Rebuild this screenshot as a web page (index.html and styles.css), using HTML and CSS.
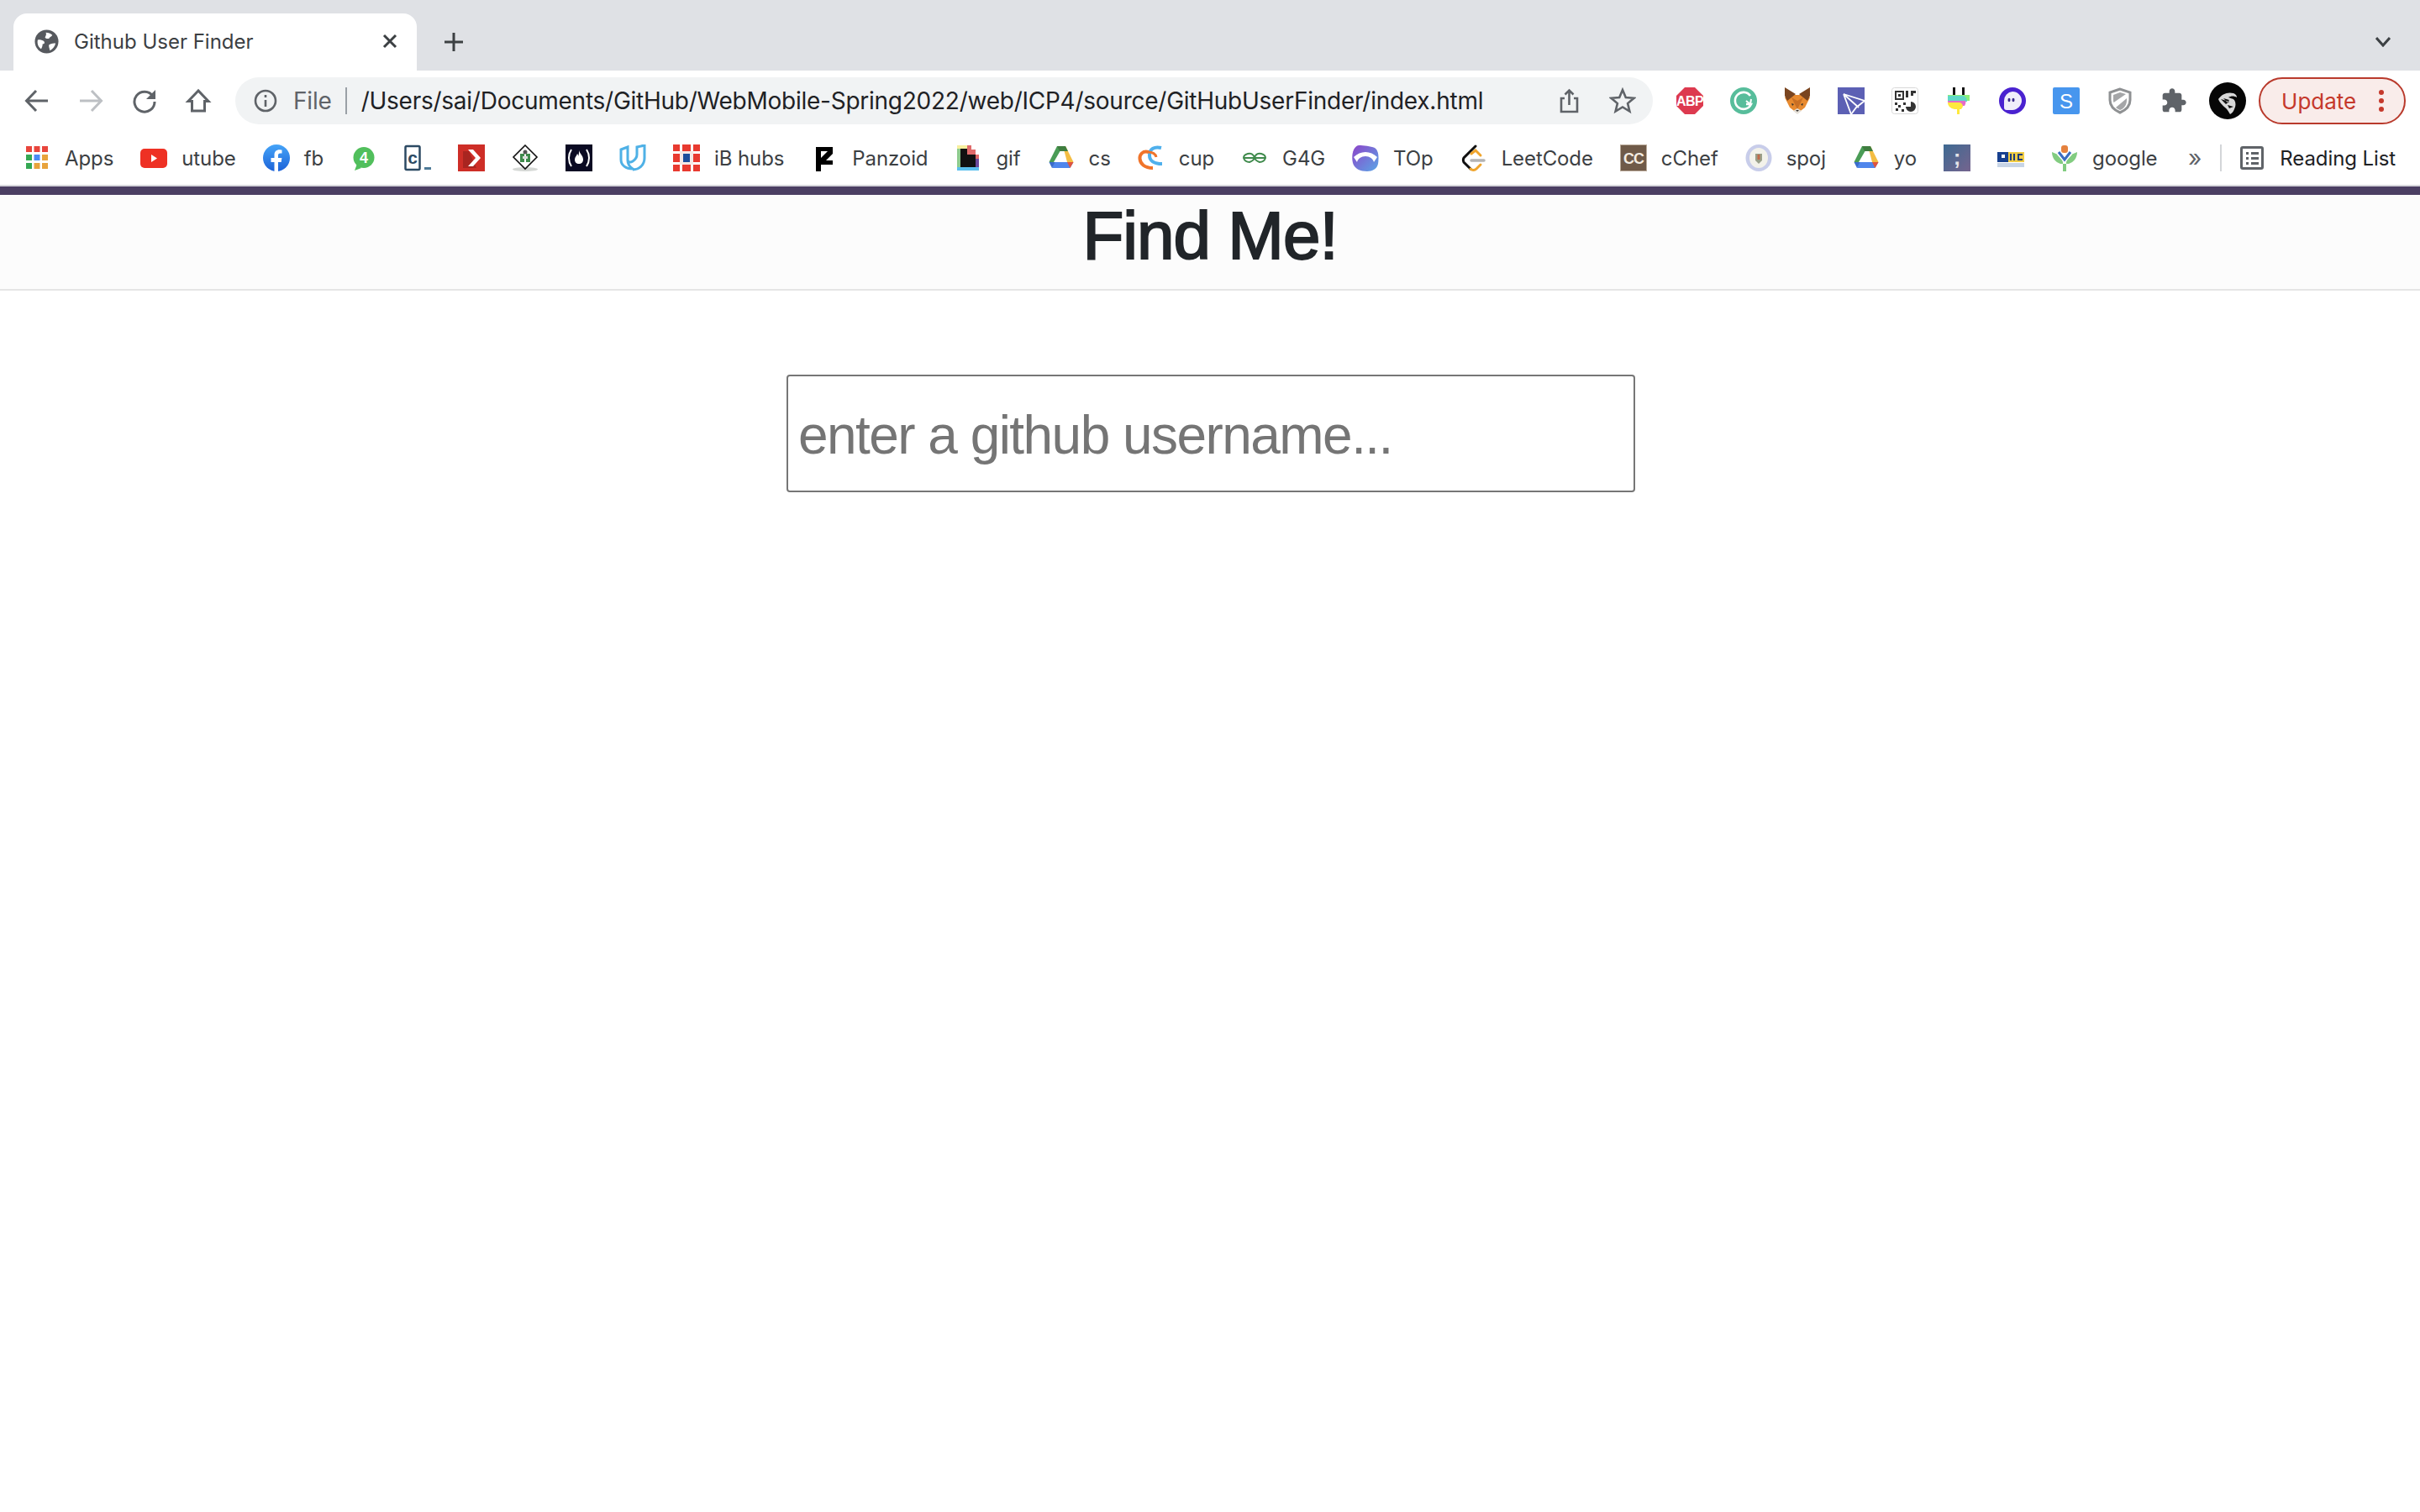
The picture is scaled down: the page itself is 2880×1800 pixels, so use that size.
FILE: index.html
```html
<!DOCTYPE html>
<html>

<head>
    <meta charset="utf-8">
    <title>Github User Finder</title>
    <link rel="stylesheet" href="styles.css">
</head>

<body>
    <svg class="defs" width="0" height="0">
        <symbol id="drive" viewBox="0 0 32 32">
            <path fill="#4a9c56" d="M11 2h7L7 21 1.500 21z" />
            <path fill="#f4bd42" d="M18 2h3l9.500 19H23z" />
            <path fill="#3f7d3f" d="M11 2h10l3 6H14z" />
            <path fill="#4f86ec" d="M7.500 21H30.500l-4 7H5z" />
            <path fill="#3a6ccb" d="M1.500 21h7L5 28z" />
            <path fill="#e0543f" d="M23 21h7.500L26.500 28z" />
        </symbol>
    </svg>

    <!-- tabs -->
    <div class="tabstrip">
        <div class="tab">
            <svg class="favicon" viewBox="0 0 30 30">
                <circle cx="15" cy="15" r="14.500" fill="#56595e" />
                <path fill="#fff" d="M4 13c3-1 6 0 8 2 1 2 0 3-2 3 0 3-1 5-2 6-3-2-5-6-4-11zM14 4c3 0 6 1 8 3-1 2-3 2-4 4-2 1-4 0-5-1 1-2 2-4 1-6zM18 19c3-2 6-2 8-2-1 4-3 7-7 9 0-2-2-5-1-7z" />
            </svg>
            <span class="tab-title">Github User Finder</span>
            <svg class="tab-close" viewBox="0 0 18 18">
                <path d="M2 2l14 14M16 2L2 16" />
            </svg>
        </div>
        <svg class="new-tab" viewBox="0 0 24 24">
            <path d="M12 1v22M1 12h22" />
        </svg>
        <svg class="tab-menu" viewBox="0 0 18 12">
            <path d="M1 1l8 9 8-9" />
        </svg>
    </div>

    <!-- address bar -->
    <div class="toolbar">
        <svg class="ico line" viewBox="0 0 32 32"><path d="M29 16H5M15 4L3.500 16 15 28" /></svg>
        <svg class="ico line off" viewBox="0 0 32 32"><path d="M3 16h24M17 4l11.500 12L17 28" /></svg>
        <svg class="ico line" viewBox="0 0 32 32"><path d="M26 10.500A12 12 0 1 0 28 17" /><path class="solid" d="M29 3v11H18z" /></svg>
        <svg class="ico line" viewBox="0 0 32 32"><path d="M16 4L4 16.500h4.500V28h15V16.500H28z" /></svg>

        <div class="omnibox">
            <svg class="ico line thin" viewBox="0 0 32 32"><circle cx="16" cy="16" r="12" /><path d="M16 15v8M16 9v3" /></svg>
            <span class="file">File</span>
            <span class="omni-sep"></span>
            <span class="url">/Users/sai/Documents/GitHub/WebMobile-Spring2022/web/ICP4/source/GitHubUserFinder/index.html</span>
            <svg class="ico line thin" viewBox="0 0 32 32"><path d="M11 13H7v16h19V13h-4M16.500 21V4M11.500 8.500l5-5 5 5" /></svg>
            <svg class="ico line thin" viewBox="0 0 32 32"><path d="M16 3l3.800 9 9.700.8-7.400 6.300 2.300 9.400L16 23.500l-8.400 5 2.300-9.400-7.400-6.300 9.700-.8z" /></svg>
        </div>

        <div class="extensions">
            <svg class="ico" viewBox="0 0 32 32">
                <path fill="#dd3a4f" d="M10 0h12l10 10v12L22 32H10L0 22V10z" />
                <text class="ext-text abp" x="16" y="22">ABP</text>
            </svg>
            <svg class="ico" viewBox="0 0 32 32">
                <circle cx="16" cy="16" r="16" fill="#57bd9b" />
                <path fill="none" stroke="#fff" stroke-width="2.600" d="M24 10a10 10 0 1 0 1 10h-6" />
                <path fill="none" stroke="#fff" stroke-width="2" d="M19 16l5 4 1-6" />
            </svg>
            <svg class="ico" viewBox="0 0 32 32">
                <path fill="#e88a2f" d="M1 12l6 12 9 7 9-7 6-12-5-3H6z" />
                <path fill="#7a4520" d="M1 0l13 8-5 4-5 4-3-6zM31 0L18 8l5 4 5 4 3-6z" />
                <path fill="#c96f24" d="M9 12l7 14 7-14-7 4z" />
                <path fill="#e5e0d8" d="M11 28l5-3 5 3-5 4z" />
                <path fill="#34302c" d="M14 27h4l-2 2zM9 19l3 1-2 2zM23 19l-3 1 2 2z" />
            </svg>
            <svg class="ico" viewBox="0 0 32 32">
                <rect width="32" height="32" fill="#5c60b4" />
                <path fill="none" stroke="#fff" stroke-width="1.800" d="M7 8l25 8M7 8l9 24M7 8l18 16M32 16l-10 8-6 8" />
            </svg>
            <svg class="ico" viewBox="0 0 32 32">
                <rect x=".5" y=".5" width="31" height="31" rx="3" fill="#fff" stroke="#d8d8d8" />
                <path fill="none" stroke="#333" stroke-width="2" d="M5 5h9v9H5z" />
                <path fill="#333" d="M8 8h3v3H8zM17 4h3v8h-3zM23 4h6v3h-3v3h-3zM4 18h3v3H4zM8 21h3v3H8zM5 25h3v3H5zM12 26h3v3h-3zM14 18h3v3h-3z" />
                <path fill="#333" d="M23 17a6 6 0 1 1-6 6h6z" />
            </svg>
            <svg class="ico" viewBox="0 0 32 32">
                <path fill="#111" d="M9 0h3v9H9zM20 0h3v9h-3z" />
                <path fill="#8bf07a" d="M3 9h26v7H3z" />
                <path fill="#5fd9c8" d="M3 10h17c4 0 6 3 6 7H3z" />
                <path fill="#e56cc8" d="M3 16h21c1 2 0 4-1 6H6c-2-2-3-4-3-6z" />
                <path fill="#ffe93d" d="M3 18h13c3 0 5 2 5 5l-2 3h-2v6h-3v-6h-3c-5-1-8-4-8-8z" />
            </svg>
            <svg class="ico" viewBox="0 0 32 32">
                <circle cx="16" cy="16" r="16" fill="#4a22d0" />
                <path fill="#f0eefa" d="M16 5a11 11 0 0 1 11 11c0 5-5 11-11 11H9a3 3 0 0 1-3-3V16A11 11 0 0 1 16 5z" />
                <ellipse cx="12" cy="15" rx="1.500" ry="2.200" fill="#3a2a8a" />
                <ellipse cx="17" cy="15" rx="1.500" ry="2.200" fill="#3a2a8a" />
            </svg>
            <svg class="ico" viewBox="0 0 32 32">
                <rect width="32" height="32" rx="2" fill="#4796ee" />
                <text class="ext-text s-mark" x="16" y="24.500">S</text>
            </svg>
            <svg class="ico" viewBox="0 0 32 32">
                <path fill="none" stroke="#8f9193" stroke-width="3" d="M16 2L4 6v9c0 7 5 12 12 15 7-3 12-8 12-15V6z" />
                <path fill="#a5a6a8" d="M16 6L8 9v6c0 1 0 2 .5 3L23 8zM24 13L11 24c1 1 3 2 5 3 5-2 8-6 8-12z" />
            </svg>
            <svg class="ico" viewBox="0 0 24 24">
                <path fill="#5f6368" d="M20.500 11H19V7c0-1.100-.9-2-2-2h-4V3.500C13 2.120 11.880 1 10.500 1S8 2.120 8 3.500V5H4c-1.100 0-1.990.9-1.990 2v3.800H3.500c1.490 0 2.700 1.210 2.700 2.700s-1.210 2.700-2.700 2.700H2V20c0 1.100.9 2 2 2h3.800v-1.500c0-1.490 1.210-2.700 2.700-2.700 1.490 0 2.700 1.210 2.700 2.700V22H17c1.100 0 2-.9 2-2v-4h1.500c1.380 0 2.500-1.120 2.500-2.500S21.880 11 20.500 11z" />
            </svg>
        </div>

        <svg class="avatar" viewBox="0 0 44 44">
            <circle cx="22" cy="22" r="22" fill="#060606" />
            <path fill="#d8d8d8" d="M11 20c4-6 11-9 18-7 3 1 4 3 4 5-3-2-7-2-10 0 2 1 5 1 7 3 2 3 2 7 0 11-1 3-3 5-5 6-2-3-3-6-6-8-3-3-6-5-8-10z" />
            <path fill="#111" d="M17 19l7 2-2 3zM22 27l7 2-5 2zM14 20l6 6 4-3z" />
        </svg>

        <div class="update">
            <span>Update</span>
            <svg class="update-dots" viewBox="0 0 8 28">
                <circle cx="4" cy="4" r="3" />
                <circle cx="4" cy="14" r="3" />
                <circle cx="4" cy="24" r="3" />
            </svg>
        </div>
    </div>

    <!-- bookmarks -->
    <div class="bookmarks">
        <div class="bm">
            <svg class="ico" viewBox="0 0 32 32">
                <g fill="#e8453c"><rect x="3" y="2" width="7" height="7" /><rect x="12.500" y="2" width="7" height="7" /><rect x="22" y="2" width="7" height="7" /></g>
                <rect x="3" y="12" width="7" height="7" fill="#34a853" /><rect x="12.500" y="12" width="7" height="7" fill="#4a8af4" /><rect x="22" y="12" width="7" height="7" fill="#e8a33c" />
                <rect x="3" y="22" width="7" height="7" fill="#34a853" /><rect x="12.500" y="22" width="7" height="7" fill="#e8a33c" /><rect x="22" y="22" width="7" height="7" fill="#e8a33c" />
            </svg>
            <span>Apps</span>
        </div>
        <div class="bm">
            <svg class="ico" viewBox="0 0 32 32">
                <rect y="5" width="32" height="23" rx="5" fill="#ee3124" />
                <path fill="#fff" d="M13 12l7 4.500-7 4.500z" />
            </svg>
            <span>utube</span>
        </div>
        <div class="bm">
            <svg class="ico" viewBox="0 0 32 32">
                <defs><linearGradient id="fbg" x1="0" y1="0" x2="0" y2="1"><stop offset="0" stop-color="#45a4f8" /><stop offset="1" stop-color="#1d63d8" /></linearGradient></defs>
                <circle cx="16" cy="16" r="16" fill="url(#fbg)" />
                <path fill="#fff" d="M13.500 32V21H9.500v-5h4v-3.500c0-4 2.400-6.200 6-6.200 1.500 0 3 .3 3 .3v4h-2c-2 0-2.500 1.200-2.500 2.500V16h4.400l-.7 5H18v11z" />
            </svg>
            <span>fb</span>
        </div>
        <div class="bm">
            <svg class="ico" viewBox="0 0 32 32">
                <circle cx="16" cy="15.500" r="12.500" fill="#51bf5c" />
                <path fill="#51bf5c" d="M5 31l3-8 5 5z" />
                <text class="ext-text four" x="16" y="22">4</text>
            </svg>
        </div>
        <div class="bm">
            <svg class="ico" viewBox="0 0 32 32">
                <rect x="1.500" y="2" width="17" height="28" rx="1.500" fill="#fff" stroke="#2c4a63" stroke-width="2.500" />
                <text class="ext-text c-mark" x="10" y="23">c</text>
                <rect x="24" y="27" width="8" height="3" fill="#4e7a97" />
            </svg>
        </div>
        <div class="bm">
            <svg class="ico" viewBox="0 0 32 32">
                <rect width="32" height="32" fill="#ce2e27" />
                <path fill="#a92520" d="M6 8h7l9 20H6z" />
                <path fill="#fff" d="M12 6h6l9 10-9 10h-6l9-10z" />
            </svg>
        </div>
        <div class="bm">
            <svg class="ico" viewBox="0 0 32 32">
                <ellipse cx="16" cy="29.500" rx="15" ry="2.500" fill="#d5d8d5" />
                <path fill="#fff" stroke="#111" stroke-width="1.600" d="M16 1l14 14-14 14L2 15z" />
                <path fill="#3f8a4c" d="M10 11h5v10h-5zM17 11h5v10h-5z" />
                <path fill="#ddd" d="M13 14h6v3h-6z" />
                <circle cx="16" cy="9" r="2.500" fill="#555" />
            </svg>
        </div>
        <div class="bm">
            <svg class="ico" viewBox="0 0 32 32">
                <rect width="32" height="32" fill="#0a0a23" />
                <path fill="none" stroke="#fff" stroke-width="2" d="M7 6c-4 6-4 14 0 20M25 6c4 6 4 14 0 20" />
                <path fill="#fff" d="M16 7c1 4 5 6 5 11 0 3-2 5-5 5s-5-2-5-5c0-3 2-4 3-7 1 1 1 2 1 3 1-2 1-4 1-7z" />
            </svg>
        </div>
        <div class="bm">
            <svg class="ico" viewBox="0 0 32 32">
                <path fill="none" stroke="#4fb1e6" stroke-width="3" d="M2 6l8-3v16c0 5 3 8 6 10-8 0-14-4-14-11zM10 5v13c0 3 3 4 6 2 3-2 5-5 5-8V3l9-2v15c0 8-6 14-14 14" />
            </svg>
        </div>
        <div class="bm">
            <svg class="ico" viewBox="0 0 32 32">
                <rect width="32" height="32" fill="#e83a30" />
                <path fill="#fff" d="M8 0h3v8H8zM21 0h3v8h-3zM8 24h3v8H8zM21 24h3v8h-3zM0 8h8v3H0zM24 8h8v3h-8zM0 21h8v3H0zM24 21h8v3h-8z" />
                <rect x="8" y="8" width="16" height="16" fill="#f4e9e6" />
                <rect x="12" y="11" width="8" height="10" fill="#1d4f9c" />
            </svg>
            <span>iB hubs</span>
        </div>
        <div class="bm">
            <svg class="ico" viewBox="0 0 32 32">
                <path fill="#000" d="M6 3h20v8l-8 8h8v5H12v8H6z" />
                <path fill="#fff" d="M12 8h8l-8 8z" />
            </svg>
            <span>Panzoid</span>
        </div>
        <div class="bm">
            <svg class="ico" viewBox="0 0 32 32">
                <path fill="#f7f09e" d="M3 1h12v4H3z" />
                <path fill="#8ecb8e" d="M3 5h4v22H3z" />
                <path fill="#e06a6a" d="M15 1h5v5h5v6H15z" />
                <path fill="#111" d="M7 5h8v7h10v15H7z" />
                <path fill="#6a4a9c" d="M25 17h4v12h-4z" />
                <path fill="#e06a6a" d="M25 12h4v5h-4z" />
                <path fill="#5bc0ee" d="M3 27h26v4H3z" />
            </svg>
            <span>gif</span>
        </div>
        <div class="bm">
            <svg class="ico"><use href="#drive" /></svg>
            <span>cs</span>
        </div>
        <div class="bm">
            <svg class="ico" viewBox="0 0 32 32">
                <path fill="none" stroke="#f0742a" stroke-width="4" d="M13 9C6 7 2 12 2.500 17 3 23 8 28 18 28" />
                <path fill="none" stroke="#4fb0ec" stroke-width="4" d="M28 4c-8-2-14 1-14 9 0 6 5 10 15 10" />
                <path fill="none" stroke="#f0742a" stroke-width="3" d="M12 9c6 0 9 2 10 6" />
            </svg>
            <span>cup</span>
        </div>
        <div class="bm">
            <svg class="ico" viewBox="0 0 32 32">
                <g fill="none" stroke="#3f8a4c" stroke-width="2"><path d="M16 16h13M16 16H3" /><path d="M16 16c-1-4-4-6-8-5s-5 3-5 5c1 3 3 5 7 5 3-1 5-2 6-5zM16 16c1-4 4-6 8-5s5 3 5 5c-1 3-3 5-7 5-3-1-5-2-6-5z" /></g>
            </svg>
            <span>G4G</span>
        </div>
        <div class="bm">
            <svg class="ico" viewBox="0 0 32 32">
                <defs><linearGradient id="top" x1="0" y1="0" x2="1" y2="1"><stop offset="0" stop-color="#8d44c9" /><stop offset="1" stop-color="#5aa6e6" /></linearGradient></defs>
                <path fill="url(#top)" d="M8 1c6 0 14 1 19 3 5 3 5 12 4 19-1 6-7 9-13 9C10 32 3 29 1 22-1 14 1 2 8 1z" />
                <path fill="#fff" d="M2 15c4-4 9-6 14-6s10 2 14 6l-4 6c-1-4-5-7-10-7S7 17 6 21z" />
            </svg>
            <span>TOp</span>
        </div>
        <div class="bm">
            <svg class="ico" viewBox="0 0 32 32">
                <path fill="none" stroke="#111" stroke-width="3" stroke-linecap="round" d="M18 2L4 16c-1 2-1 3 0 5l8 8" />
                <path fill="none" stroke="#f0a52c" stroke-width="3" stroke-linecap="round" d="M13 11l5-4 6 6M12 29c2 2 5 2 7 0l5-5" />
                <path fill="none" stroke="#b4b4b4" stroke-width="3.500" stroke-linecap="round" d="M13 19h15" />
            </svg>
            <span>LeetCode</span>
        </div>
        <div class="bm">
            <svg class="ico" viewBox="0 0 32 32">
                <rect width="32" height="32" fill="#6f5a48" />
                <rect x=".5" y=".5" width="31" height="31" fill="none" stroke="#b9a998" />
                <text class="ext-text cc-mark" x="16" y="22.500">CC</text>
            </svg>
            <span>cChef</span>
        </div>
        <div class="bm">
            <svg class="ico" viewBox="0 0 32 32">
                <ellipse cx="16" cy="16" rx="15.500" ry="16" fill="#c8cdea" />
                <ellipse cx="16" cy="16" rx="11" ry="12" fill="#f3f2ea" />
                <path fill="#9aa08a" d="M12 11h8v8l-4 4-4-4z" />
                <rect x="14.500" y="12" width="3" height="6" fill="#c26a4a" />
            </svg>
            <span>spoj</span>
        </div>
        <div class="bm">
            <svg class="ico"><use href="#drive" /></svg>
            <span>yo</span>
        </div>
        <div class="bm">
            <svg class="ico" viewBox="0 0 32 32">
                <defs><linearGradient id="semi" x1="0" y1="0" x2="1" y2="1"><stop offset="0" stop-color="#3e6a92" /><stop offset="1" stop-color="#75648e" /></linearGradient></defs>
                <rect width="32" height="32" fill="url(#semi)" />
                <text class="ext-text semi-mark" x="16" y="24">;</text>
            </svg>
        </div>
        <div class="bm">
            <svg class="ico" viewBox="0 0 32 32">
                <rect y="9" width="13" height="12" fill="#17408f" />
                <rect x="5" y="12" width="4" height="4" fill="#fff" />
                <rect x="13" y="9" width="19" height="12" fill="#f0cc44" />
                <path fill="#1f3d7a" d="M15 11h2v8h-2zM19 11h2v8h-2zM24 11h6v2h-4v4h4v2h-6z" />
                <rect y="22" width="32" height="5" fill="#c7d4e6" />
            </svg>
        </div>
        <div class="bm">
            <svg class="ico" viewBox="0 0 32 32">
                <path fill="#6cc36a" d="M1 9l7 3c3 2 5 6 6 9v11h4V21c1-3 3-7 6-9l7-3c0 7-4 12-10 14h-10C5 21 1 16 1 9z" opacity=".85" />
                <path fill="#fff" d="M7 12l9 10 9-10-9-3z" />
                <path fill="none" stroke="#3a6cc0" stroke-width="3" d="M9 9l7 9 7-9" />
                <rect x="12" y="1" width="8" height="9" rx="3" fill="#e5813e" />
            </svg>
            <span>google</span>
        </div>

        <div class="bm-end">
            <span class="more">»</span>
            <span class="bm-sep"></span>
            <div class="bm reading">
                <svg class="ico" viewBox="0 0 32 32">
                    <rect x="3.500" y="3.500" width="25" height="25" rx="1.500" fill="none" stroke="#5f6368" stroke-width="3" />
                    <path fill="#5f6368" d="M9 9h3v3H9zM15 9h9v3h-9zM9 15h3v3H9zM15 15h9v3h-9zM9 21h3v3H9zM15 21h9v3h-9z" />
                </svg>
                <span>Reading List</span>
            </div>
        </div>
    </div>

    <div class="accent"></div>

    <!-- page -->
    <header class="page-head">
        <h1>Find Me!</h1>
    </header>
    <main class="page-main">
        <input class="search" type="text" placeholder="enter a github username...">
    </main>
</body>

</html>
```

FILE: styles.css
```css
* {
    box-sizing: border-box;
}

body {
    margin: 0;
    background-color: #fff;
    font-family: Inter, "Liberation Sans", sans-serif;
    overflow: hidden;
}

.defs {
    display: block;
    height: 0;
}

svg {
    flex: none;
    display: block;
}

.ico {
    width: 32px;
    height: 32px;
}

.line path,
.line circle {
    fill: none;
    stroke: #5f6368;
    stroke-width: 3;
}

.line.thin path,
.line.thin circle {
    stroke-width: 2.6;
}

.line .solid {
    fill: #5f6368;
    stroke: none;
}

.line.off path {
    stroke: #bdc0c4;
}

.ext-text {
    font-family: "Liberation Sans", sans-serif;
    text-anchor: middle;
    fill: #fff;
    font-weight: 700;
}

.abp {
    font-size: 16px;
    letter-spacing: -0.6px;
}

.s-mark {
    font-size: 24px;
    font-weight: 400;
}

.four {
    font-size: 18px;
}

.c-mark {
    font-size: 21px;
    fill: #2c4a63;
}

.cc-mark {
    font-size: 18px;
    letter-spacing: -1px;
    fill: #f4ece2;
}

.semi-mark {
    font-size: 26px;
    fill: #e4e4ea;
}

/* tabs */
.tabstrip {
    height: 84px;
    background-color: #dfe1e5;
    display: flex;
    align-items: flex-end;
    padding-left: 16px;
}

.tab {
    width: 480px;
    height: 68px;
    background-color: #fff;
    border-radius: 16px 16px 0 0;
    display: flex;
    align-items: center;
    padding: 0 23px 2px 25px;
    gap: 18px;
    font-size: 24px;
    color: #3c4043;
}

.favicon {
    width: 29px;
    height: 29px;
}

.tab-title {
    flex: 1;
}

.tab-close {
    width: 18px;
    height: 18px;
}

.tab-close path,
.new-tab path,
.tab-menu path {
    fill: none;
    stroke: #3c4043;
    stroke-width: 3;
}

.new-tab {
    width: 24px;
    height: 24px;
    margin: 0 0 22px 32px;
}

.tab-menu {
    width: 18px;
    height: 12px;
    margin: 0 35px 28px auto;
}

/* address bar */
.toolbar {
    height: 64px;
    padding: 8px 17px 0 28px;
    display: flex;
    align-items: center;
    gap: 32px;
}

.omnibox {
    width: 1688px;
    height: 56px;
    border-radius: 28px;
    background-color: #f1f3f4;
    margin-left: -4px;
    padding: 0 20px;
    display: flex;
    align-items: center;
    font-size: 28px;
}

.omnibox .ico + .ico {
    margin-left: 32px;
}

.file {
    margin-left: 17px;
    color: #5f6368;
    letter-spacing: -0.2px;
}

.omni-sep {
    width: 2px;
    height: 32px;
    background-color: #9aa0a6;
    margin: 0 17px 0 16px;
}

.url {
    flex: 1;
    color: #202124;
    white-space: nowrap;
    letter-spacing: -0.25px;
}

.extensions {
    display: flex;
    gap: 32px;
    margin-left: -4px;
}

.avatar {
    width: 44px;
    height: 44px;
    margin-left: -6px;
}

.update {
    width: 175px;
    height: 56px;
    margin-left: -17px;
    border: 2px solid #b93a2c;
    border-radius: 28px;
    background-color: #f9ecea;
    color: #c5392b;
    font-size: 26px;
    display: flex;
    align-items: center;
    justify-content: space-between;
    padding: 0 23px 0 25px;
}

.update-dots {
    width: 8px;
    height: 28px;
    fill: #c5392b;
}

/* bookmarks */
.bookmarks {
    height: 72px;
    padding: 8px 29px 0 28px;
    display: flex;
    align-items: center;
    gap: 32px;
    font-size: 24px;
    color: #3c4043;
    white-space: nowrap;
}

.bm {
    display: flex;
    align-items: center;
    gap: 17px;
}

.bm span {
    letter-spacing: -0.1px;
}

.bm-end {
    margin-left: auto;
    display: flex;
    align-items: center;
}

.more {
    font-size: 28px;
    line-height: 1;
    color: #5f6368;
}

.bm-sep {
    width: 2px;
    height: 32px;
    background-color: #d3d5d8;
    margin: 0 20px 0 22px;
}

.reading span {
    color: #202124;
}

.accent {
    height: 12px;
    background-color: #4b3f63;
    border-top: 2px solid #d7d7dc;
}

/* page */
.page-head {
    height: 114px;
    background-color: #fcfcfc;
    border-bottom: 2px solid #e5e5e5;
    text-align: center;
}

h1 {
    margin: 0;
    padding-top: 1px;
    font-family: "Liberation Sans", sans-serif;
    font-size: 80px;
    font-weight: 400;
    line-height: 96px;
    color: #212529;
    -webkit-text-stroke: 2px #212529;
    letter-spacing: -1px;
}

.page-main {
    padding-top: 100px;
    display: flex;
    justify-content: center;
}

.search {
    width: 1010px;
    height: 140px;
    margin-left: 2px;
    border: 2px solid #767676;
    border-radius: 4px;
    padding: 4px 12px 0;
    background-color: #fff;
    font-family: "Liberation Sans", sans-serif;
    font-size: 64px;
    letter-spacing: -1.55px;
}

.search::placeholder {
    color: #757575;
    opacity: 1;
}
```
